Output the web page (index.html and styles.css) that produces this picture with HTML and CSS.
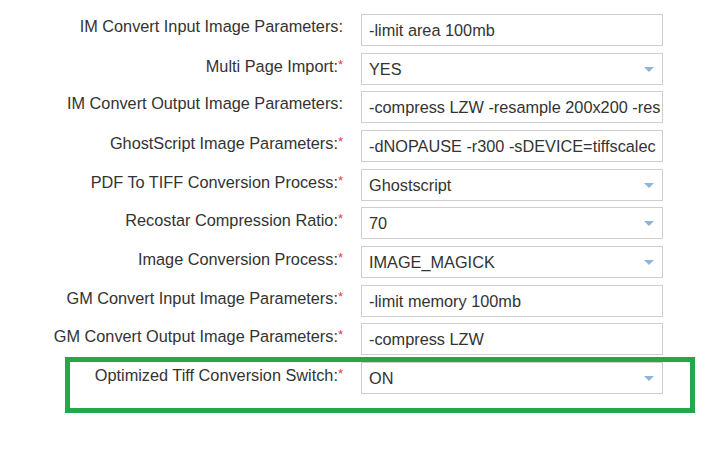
FILE: index.html
```html
<!DOCTYPE html>
<html lang="en">
<head>
  <meta charset="UTF-8">
  <title>Image Conversion Settings</title>
  <link rel="stylesheet" href="styles.css">
</head>
<body>

  <div id="settings-form">

    <div class="row">
      <label>IM Convert Input Image Parameters:</label>
      <div class="field">-limit area 100mb</div>
    </div>

    <div class="row">
      <label>Multi Page Import:<span class="req">*</span></label>
      <div class="field select">YES<span class="arrow"></span></div>
    </div>

    <div class="row">
      <label>IM Convert Output Image Parameters:</label>
      <div class="field">-compress LZW -resample 200x200 -res</div>
    </div>

    <div class="row">
      <label>GhostScript Image Parameters:<span class="req">*</span></label>
      <div class="field">-dNOPAUSE -r300 -sDEVICE=tiffscalec</div>
    </div>

    <div class="row">
      <label>PDF To TIFF Conversion Process:<span class="req">*</span></label>
      <div class="field select">Ghostscript<span class="arrow"></span></div>
    </div>

    <div class="row">
      <label>Recostar Compression Ratio:<span class="req">*</span></label>
      <div class="field select">70<span class="arrow"></span></div>
    </div>

    <div class="row">
      <label>Image Conversion Process:<span class="req">*</span></label>
      <div class="field select">IMAGE_MAGICK<span class="arrow"></span></div>
    </div>

    <div class="row">
      <label>GM Convert Input Image Parameters:<span class="req">*</span></label>
      <div class="field">-limit memory 100mb</div>
    </div>

    <div class="row">
      <label>GM Convert Output Image Parameters:<span class="req">*</span></label>
      <div class="field">-compress LZW</div>
    </div>

    <!-- highlighted setting -->
    <div class="highlight">
      <div class="row">
        <label>Optimized Tiff Conversion Switch:<span class="req">*</span></label>
        <div class="field select">ON<span class="arrow"></span></div>
      </div>
    </div>

  </div>

</body>
</html>
```

FILE: styles.css
```css
html, body {
  margin: 0;
  background: #fff;
  color: #333;
  font-family: "Liberation Sans", Arial, sans-serif;
  font-size: 16px;
}

#settings-form {
  display: flex;
  flex-direction: column;
  gap: 6.67px;
  padding-top: 14px;
}

.row {
  display: grid;
  grid-template-columns: 343px 302px;
  column-gap: 18px;
  align-items: start;
}

.row label {
  text-align: right;
  white-space: nowrap;
  font-size: 16.3px;
  line-height: 18px;
  padding-top: 3px;
  color: #333;
}

.req {
  color: #e0403f;
  font-size: 13px;
  vertical-align: 3px;
}

.field {
  position: relative;
  box-sizing: border-box;
  height: 32px;
  line-height: 30px;
  padding: 0 0 0 7px;
  border: 1px solid #cfcfcf;
  background: #fff;
  color: #333;
  font-size: 16.3px;
  white-space: nowrap;
  overflow: hidden;
}

.arrow {
  position: absolute;
  right: 8px;
  top: 13px;
  width: 0;
  height: 0;
  border-left: 5.5px solid transparent;
  border-right: 5.5px solid transparent;
  border-top: 5px solid #8db5d8;
}

.highlight {
  margin: -5px 0 0 65px;
  width: 630px;
  box-sizing: border-box;
  border: 5px solid #22a84b;
  padding-bottom: 14px;
}

.highlight .row {
  grid-template-columns: 273px 302px;
}
```
